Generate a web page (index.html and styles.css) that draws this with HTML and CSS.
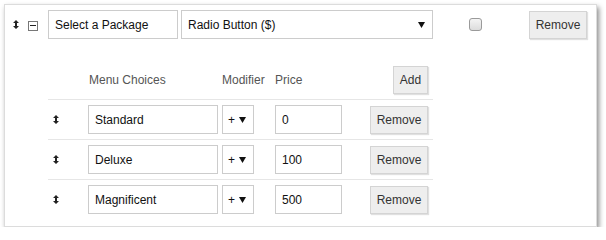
FILE: index.html
```html
<!DOCTYPE html>
<html>
<head>
<meta charset="utf-8">
<link rel="stylesheet" href="styles.css">
</head>
<body>
<div class="card">
  <div class="top-row">
    <svg class="drag" width="6" height="9" viewBox="0 0 6 9"><polygon points="3,0 6,3 4,3 4,6 6,6 3,9 0,6 2,6 2,3 0,3" /></svg>
    <span class="collapse"><span class="bar"></span></span>
    <div class="field name-field">Select a Package</div>
    <div class="field select type-select"><span>Radio Button ($)</span><svg class="arrow" width="7" height="6" viewBox="0 0 7 6"><polygon points="0,0 7,0 3.5,6"/></svg></div>
    <span class="check"></span>
    <button class="btn top-remove">Remove</button>
  </div>
  <div class="choices">
    <div class="grid head">
      <span></span>
      <span class="label">Menu Choices</span>
      <span class="label">Modifier</span>
      <span class="label">Price</span>
      <span class="add-cell"><button class="btn add">Add</button></span>
    </div>
    <div class="grid row">
      <svg class="drag sm" width="6" height="9" viewBox="0 0 6 9"><polygon points="3,0 6,3 4,3 4,6 6,6 3,9 0,6 2,6 2,3 0,3" /></svg>
      <div class="field choice">Standard</div>
      <div class="field select mod"><span>+</span><svg class="arrow" width="7" height="6" viewBox="0 0 7 6"><polygon points="0,0 7,0 3.5,6"/></svg></div>
      <div class="field price">0</div>
      <button class="btn">Remove</button>
    </div>
    <div class="grid row">
      <svg class="drag sm" width="6" height="9" viewBox="0 0 6 9"><polygon points="3,0 6,3 4,3 4,6 6,6 3,9 0,6 2,6 2,3 0,3" /></svg>
      <div class="field choice">Deluxe</div>
      <div class="field select mod"><span>+</span><svg class="arrow" width="7" height="6" viewBox="0 0 7 6"><polygon points="0,0 7,0 3.5,6"/></svg></div>
      <div class="field price">100</div>
      <button class="btn">Remove</button>
    </div>
    <div class="grid row">
      <svg class="drag sm" width="6" height="9" viewBox="0 0 6 9"><polygon points="3,0 6,3 4,3 4,6 6,6 3,9 0,6 2,6 2,3 0,3" /></svg>
      <div class="field choice">Magnificent</div>
      <div class="field select mod"><span>+</span><svg class="arrow" width="7" height="6" viewBox="0 0 7 6"><polygon points="0,0 7,0 3.5,6"/></svg></div>
      <div class="field price">500</div>
      <button class="btn">Remove</button>
    </div>
  </div>
</div>
</body>
</html>
```
FILE: styles.css
```css
html, body {
  margin: 0;
  padding: 0;
  background: #ffffff;
}
body {
  font-family: "Liberation Sans", Arial, sans-serif;
  font-size: 12px;
  color: #222;
}
.card {
  box-sizing: border-box;
  margin: 4px 0 0 4px;
  width: 593px;
  height: 223px;
  border: 1px solid #dcdcdc;
  background: #fff;
  box-shadow: 2px 3px 5px rgba(0, 0, 0, 0.45);
  padding: 5px 0 0 0;
}
.top-row {
  display: flex;
  align-items: center;
  height: 29px;
}
.drag {
  display: block;
  fill: #222;
  flex: none;
}
.top-row .drag {
  margin-left: 8px;
  margin-bottom: 1px;
}
.collapse {
  box-sizing: border-box;
  flex: none;
  width: 10px;
  height: 10px;
  margin-left: 9px;
  margin-top: 2px;
  border: 1px solid #777;
  display: flex;
  align-items: center;
  justify-content: center;
}
.collapse .bar {
  width: 6px;
  height: 1px;
  background: #222;
}
.field {
  box-sizing: border-box;
  height: 29px;
  border: 1px solid #cccccc;
  background: #fff;
  padding: 0 6px;
  display: flex;
  align-items: center;
  color: #111;
  flex: none;
}
.name-field {
  width: 130px;
  margin-left: 10px;
}
.select {
  justify-content: space-between;
}
.type-select {
  width: 252px;
  margin-left: 3px;
  padding-right: 7px;
}
.arrow {
  display: block;
  fill: #111;
}
.check {
  box-sizing: border-box;
  flex: none;
  width: 13px;
  height: 13px;
  margin-left: 36px;
  border: 1px solid #9a9a9a;
  border-radius: 3px;
  background: linear-gradient(#f4f4f4, #dcdcdc);
}
.btn {
  box-sizing: border-box;
  height: 28px;
  padding: 0;
  border: 1px solid #d4d4d4;
  background: #eeeeee;
  color: #333;
  font-family: "Liberation Sans", Arial, sans-serif;
  font-size: 12px;
  box-shadow: 1px 1px 1px rgba(0, 0, 0, 0.12);
  width: 58px;
}
.top-remove {
  margin-left: 47px;
}
.choices {
  margin-left: 43px;
  width: 385px;
  margin-top: 27px;
}
.grid {
  display: grid;
  grid-template-columns: 40px 134px 53px 95px 58px;
  align-items: center;
}
.head {
  height: 28px;
  padding-bottom: 5px;
}
.label {
  color: #555;
  padding-left: 1px;
}
.label:nth-child(3), .label:nth-child(4) {
  padding-left: 0;
}
.add-cell {
  display: flex;
  justify-content: flex-end;
}
.btn.add {
  width: 35px;
}
.row {
  border-top: 1px solid #e6e6e6;
  padding: 5px 0;
}
.row .btn {
  height: 28px;
}
.drag.sm {
  margin-left: 5px;
}
.choice {
  width: 130px;
}
.mod {
  width: 32px;
  padding-left: 5px;
  padding-right: 7px;
}
.price {
  width: 67px;
}
```
